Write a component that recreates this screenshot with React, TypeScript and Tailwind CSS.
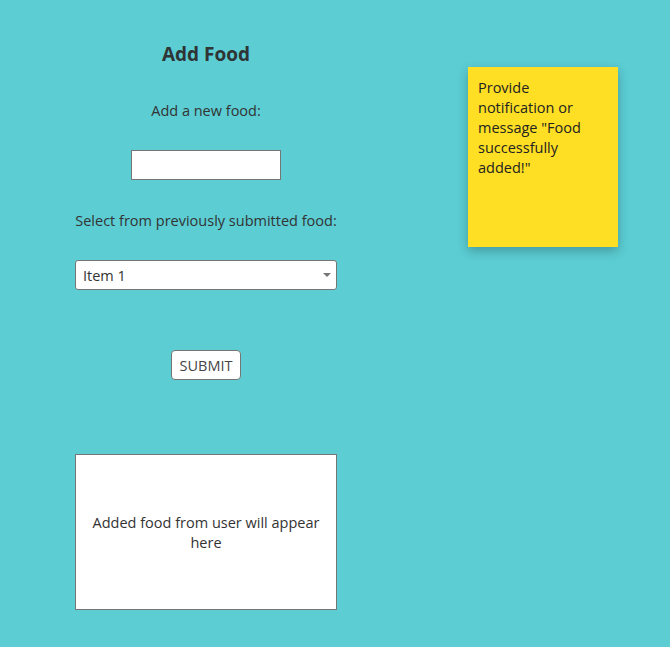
export default function App() {
  return (
    <div
      className="min-h-screen w-full bg-[#5bcdd3] flex items-start pl-[75px] text-[#333333]"
      style={{ fontFamily: '"Open Sans", "Noto Sans", sans-serif' }}
    >
      <div className="w-[262px] flex flex-col items-center">
        <h2 className="mt-[42px] text-[19px] leading-[24px] font-bold text-[#2f3435]">Add Food</h2>
        <p className="mt-[35px] text-[14.5px] leading-[20px]">Add a new food:</p>
        <input
          type="text"
          className="mt-[29px] h-[30px] w-[150px] bg-white border border-[#767676] outline-none px-1"
        />
        <p className="mt-[31px] text-[14.5px] leading-[20px]">Select from previously submitted food:</p>
        <div className="relative mt-[29px] w-full">
          <select className="appearance-none w-full h-[30px] bg-white border border-[#767676] rounded-[3px] pl-[7px] pt-[1px] text-[14.5px] text-[#333333] outline-none">
            <option>Item 1</option>
            <option>Item 2</option>
          </select>
          <span className="pointer-events-none absolute right-[6px] top-[13px] w-0 h-0 border-l-[4px] border-r-[4px] border-t-[4px] border-l-transparent border-r-transparent border-t-[#777777]" />
        </div>
        <button className="mt-[60px] h-[30px] w-[70px] bg-white border border-[#767676] rounded-[4px] pt-[1px] text-[14.5px] text-[#444444]">
          SUBMIT
        </button>
        <div className="mt-[74px] h-[156px] w-full bg-white border border-[#767676] flex items-center justify-center px-[14px] pt-[2px] text-center text-[14.5px] leading-[20px]">
          Added food from user will appear here
        </div>
      </div>
      <div className="ml-[131px] mt-[67px] w-[150px] h-[180px] bg-[#ffdf23] shadow-[0_4px_10px_rgba(0,0,0,0.25)] pl-[10px] pr-[12px] pt-[11px] pb-[10px] text-[14.5px] leading-[20px] text-[#222222]">
        Provide notification or message "Food successfully added!"
      </div>
    </div>
  );
}
